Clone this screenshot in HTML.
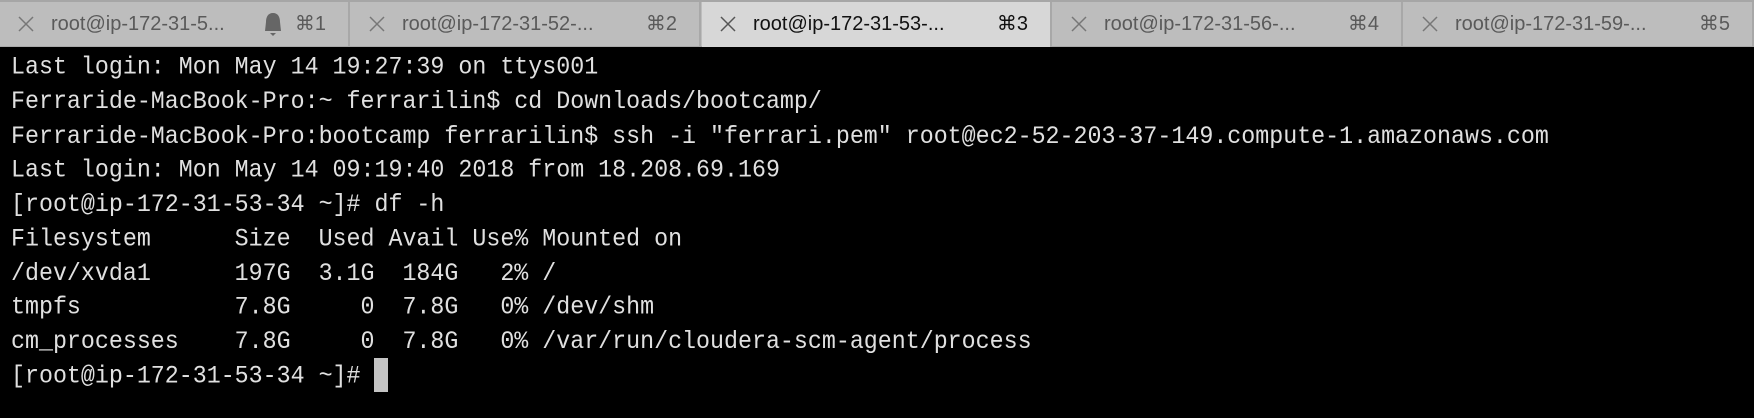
<!DOCTYPE html>
<html><head><style>
body{margin:0;width:1754px;height:418px;background:#000;overflow:hidden;position:relative}
.bar{position:absolute;left:0;top:0;width:1754px;height:47px;background:#bdbdbd;border-top:2px solid #a6a6a6;box-sizing:border-box;border-bottom:1px solid #a8a8a8}
.tab{position:absolute;top:0;height:44px;width:350px;border-right:2px solid #a8a8a8;font-family:"Liberation Sans",sans-serif;font-size:20px;color:#5a5a5a;line-height:44px;box-sizing:border-box}
.tab.act{background:#d7d7d7;color:#111;height:45px}
.x{position:absolute;left:18px;top:14px;width:16px;height:16px}
.t{position:absolute;left:51px;top:0}
.k{position:absolute;right:22px;top:0}
pre{position:absolute;left:11px;top:51px;margin:0;font-family:"Liberation Mono",monospace;font-size:23.3px;line-height:31.2px;color:#e0e0e0;transform:scaleY(1.08);transform-origin:0 0}
.cur{position:absolute;left:374px;top:358px;width:14px;height:34px;background:#c4c4c4}
</style></head><body>
<div class="bar">
<div class="tab" style="left:0"><svg class="x" viewBox="0 0 16 16"><path d="M1 1L15 15M15 1L1 15" stroke="#777" stroke-width="1.5"/></svg><span class="t">root@ip-172-31-5...</span><svg style="position:absolute;left:262px;top:10px" width="22" height="25" viewBox="0 0 22 25"><path d="M11 1C6 1 4 5 4 10L3 19H19L18 10C18 5 16 1 11 1Z" fill="#666"/><path d="M8 21H14L11 24Z" fill="#666"/></svg><span class="k">⌘1</span></div>
<div class="tab" style="left:351px"><svg class="x" viewBox="0 0 16 16"><path d="M1 1L15 15M15 1L1 15" stroke="#777" stroke-width="1.5"/></svg><span class="t">root@ip-172-31-52-...</span><span class="k">⌘2</span></div>
<div class="tab act" style="left:702px"><svg class="x" viewBox="0 0 16 16"><path d="M1 1L15 15M15 1L1 15" stroke="#555" stroke-width="1.5"/></svg><span class="t">root@ip-172-31-53-...</span><span class="k">⌘3</span></div>
<div class="tab" style="left:1053px"><svg class="x" viewBox="0 0 16 16"><path d="M1 1L15 15M15 1L1 15" stroke="#777" stroke-width="1.5"/></svg><span class="t">root@ip-172-31-56-...</span><span class="k">⌘4</span></div>
<div class="tab" style="left:1404px"><svg class="x" viewBox="0 0 16 16"><path d="M1 1L15 15M15 1L1 15" stroke="#777" stroke-width="1.5"/></svg><span class="t">root@ip-172-31-59-...</span><span class="k">⌘5</span></div>
</div>
<pre style="line-height:31.76px">Last login: Mon May 14 19:27:39 on ttys001
Ferraride-MacBook-Pro:~ ferrarilin$ cd Downloads/bootcamp/
Ferraride-MacBook-Pro:bootcamp ferrarilin$ ssh -i "ferrari.pem" root@ec2-52-203-37-149.compute-1.amazonaws.com
Last login: Mon May 14 09:19:40 2018 from 18.208.69.169
[root@ip-172-31-53-34 ~]# df -h
Filesystem      Size  Used Avail Use% Mounted on
/dev/xvda1      197G  3.1G  184G   2% /
tmpfs           7.8G     0  7.8G   0% /dev/shm
cm_processes    7.8G     0  7.8G   0% /var/run/cloudera-scm-agent/process
[root@ip-172-31-53-34 ~]# </pre>
<div class="cur"></div>
</body></html>
